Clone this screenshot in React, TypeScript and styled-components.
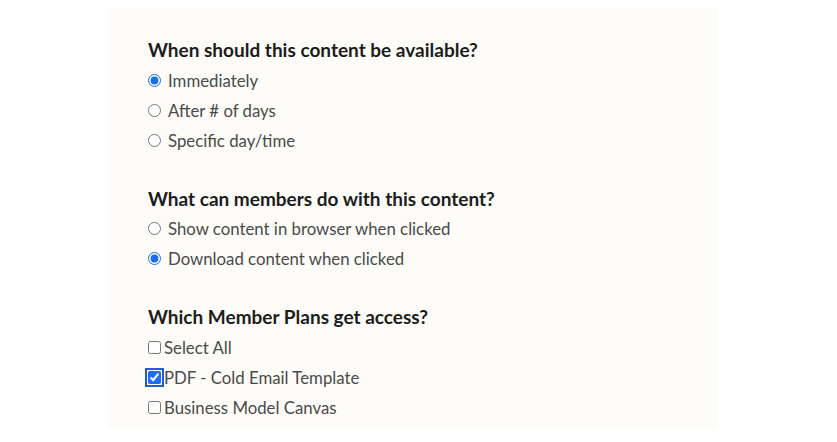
import React from "react";
import styled, { createGlobalStyle } from "styled-components";

const Global = createGlobalStyle`
  html, body { margin: 0; padding: 0; background: #ffffff; }
  body { font-family: Lato, "Noto Sans", sans-serif; }
`;

const Page = styled.div`
  padding: 8px 0 0 108px;
`;

const Panel = styled.div`
  width: 569px;
  height: 393px;
  background: #fdfcf8;
  padding: 28px 0 0 40px;
  display: flex;
  flex-direction: column;
  gap: 29.5px;
`;

const Section = styled.div`
  display: flex;
  flex-direction: column;
`;

const Heading = styled.div`
  height: 28px;
  line-height: 28px;
  margin-bottom: 1px;
  font-size: 19px;
  font-weight: 700;
  color: #1c1c1c;
`;

const Option = styled.label`
  height: 30px;
  display: flex;
  align-items: center;
  font-size: 16.8px;
  color: #4a4a4a;
`;

const Radio = styled.input.attrs({ type: "radio" })`
  width: 13px;
  height: 13px;
  margin: 0 7px 0 0;
  accent-color: #1a6cf0;
`;

const Check = styled.input.attrs({ type: "checkbox" })<{ $focus?: boolean }>`
  width: 13px;
  height: 13px;
  margin: 0 3px 0 0;
  accent-color: #1a6cf0;
  border-radius: 3px;
  ${(p) => (p.$focus ? "outline: 2px solid #1a5fd6; outline-offset: 1px;" : "")}
`;

export default function App() {
  return (
    <>
      <Global />
      <Page>
        <Panel>
          <Section>
            <Heading>When should this content be available?</Heading>
            <Option><Radio name="a" defaultChecked />Immediately</Option>
            <Option><Radio name="a" />After # of days</Option>
            <Option><Radio name="a" />Specific day/time</Option>
          </Section>
          <Section>
            <Heading>What can members do with this content?</Heading>
            <Option><Radio name="b" />Show content in browser when clicked</Option>
            <Option><Radio name="b" defaultChecked />Download content when clicked</Option>
          </Section>
          <Section>
            <Heading>Which Member Plans get access?</Heading>
            <Option><Check />Select All</Option>
            <Option><Check defaultChecked $focus />PDF - Cold Email Template</Option>
            <Option><Check />Business Model Canvas</Option>
          </Section>
        </Panel>
      </Page>
    </>
  );
}
